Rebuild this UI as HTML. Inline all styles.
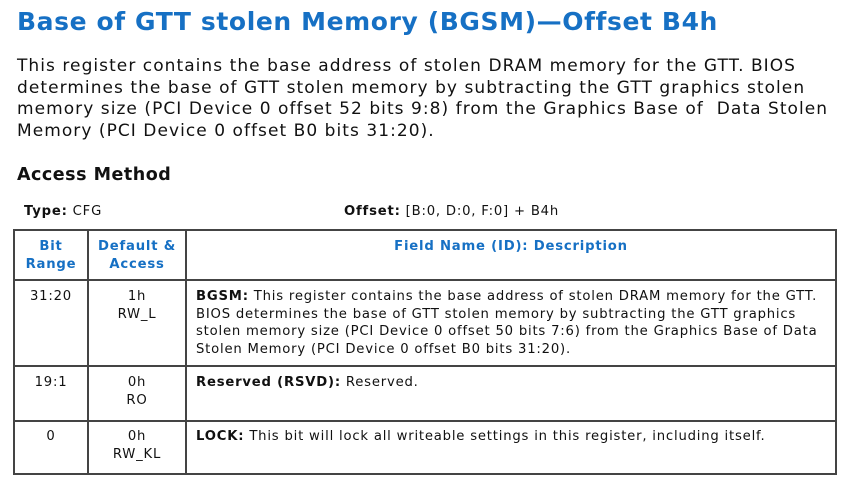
<!DOCTYPE html>
<html><head><meta charset="utf-8"><style>
html,body{margin:0;padding:0;background:#fff;width:847px;height:487px;overflow:hidden;position:relative;font-family:"DejaVu Sans","Liberation Sans",sans-serif;color:#111}
.a{position:absolute;white-space:nowrap}
.t{font-size:25px;font-weight:bold;color:#1670c4;line-height:30px;letter-spacing:0.6px}
.p{font-size:17px;line-height:21.5px;letter-spacing:1.05px}
.s{font-size:13.2px;line-height:17.5px;letter-spacing:0.8px}
.b{color:#1670c4;font-weight:bold}
.c{text-align:center}
.h{position:absolute;background:#444;height:2px}
.v{position:absolute;background:#444;width:2px}
</style></head><body>
<div class="a t" style="left:17px;top:7px">Base of GTT stolen Memory (BGSM)—Offset B4h</div>
<div class="a p" style="left:17px;top:56px">This register contains the base address of stolen DRAM memory for the GTT. BIOS<br>determines the base of GTT stolen memory by subtracting the GTT graphics stolen<br>memory size (PCI Device 0 offset 52 bits 9:8) from the Graphics Base of &nbsp;Data Stolen<br>Memory (PCI Device 0 offset B0 bits 31:20).</div>
<div class="a" style="left:17px;top:163px;font-size:17.5px;font-weight:bold;line-height:24px;letter-spacing:0.5px">Access Method</div>
<div class="a s" style="left:24px;top:203px"><b>Type:</b> CFG</div>
<div class="a s" style="left:344px;top:203px"><b>Offset:</b> [B:0, D:0, F:0] + B4h</div>

<div class="h" style="left:13px;top:229px;width:824px"></div>
<div class="h" style="left:13px;top:279px;width:824px"></div>
<div class="h" style="left:13px;top:365px;width:824px"></div>
<div class="h" style="left:13px;top:420px;width:824px"></div>
<div class="h" style="left:13px;top:473px;width:824px"></div>
<div class="v" style="left:13px;top:229px;height:246px"></div>
<div class="v" style="left:87px;top:229px;height:246px"></div>
<div class="v" style="left:185px;top:229px;height:246px"></div>
<div class="v" style="left:835px;top:229px;height:246px"></div>

<div class="a s b c" style="left:15px;width:72px;top:238px">Bit<br>Range</div>
<div class="a s b c" style="left:89px;width:96px;top:238px">Default &amp;<br>Access</div>
<div class="a s b c" style="left:187px;width:648px;top:238px">Field Name (ID): Description</div>

<div class="a s c" style="left:15px;width:72px;top:288px">31:20</div>
<div class="a s c" style="left:89px;width:96px;top:288px">1h<br>RW_L</div>
<div class="a s" style="left:196px;top:288px"><b>BGSM:</b> This register contains the base address of stolen DRAM memory for the GTT.<br>BIOS determines the base of GTT stolen memory by subtracting the GTT graphics<br>stolen memory size (PCI Device 0 offset 50 bits 7:6) from the Graphics Base of Data<br>Stolen Memory (PCI Device 0 offset B0 bits 31:20).</div>

<div class="a s c" style="left:15px;width:72px;top:374px">19:1</div>
<div class="a s c" style="left:89px;width:96px;top:374px">0h<br>RO</div>
<div class="a s" style="left:196px;top:374px"><b>Reserved (RSVD):</b> Reserved.</div>

<div class="a s c" style="left:15px;width:72px;top:428px">0</div>
<div class="a s c" style="left:89px;width:96px;top:428px">0h<br>RW_KL</div>
<div class="a s" style="left:196px;top:428px"><b>LOCK:</b> This bit will lock all writeable settings in this register, including itself.</div>
</body></html>
